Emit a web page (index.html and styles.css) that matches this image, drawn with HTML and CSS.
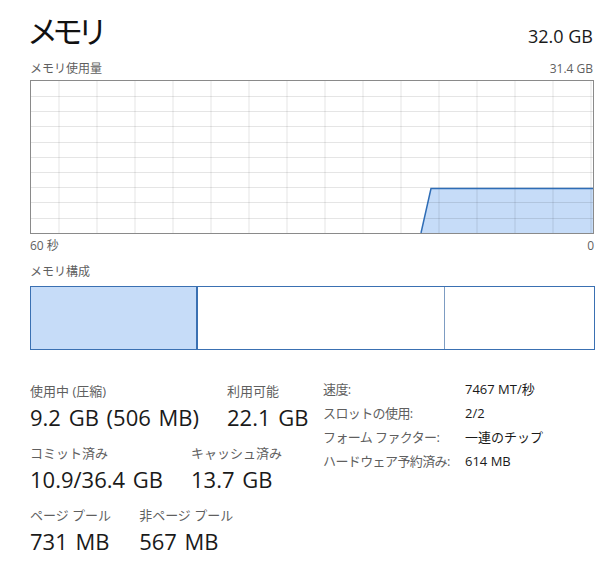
FILE: index.html
```html
<!DOCTYPE html>
<html lang="ja">
<head>
<meta charset="utf-8">
<link rel="stylesheet" href="styles.css">
</head>
<body>
<div class="page">
  <div class="header">
    <div class="title">メモリ</div>
    <div class="total">32.0 GB</div>
  </div>
  <div class="caption-row">
    <span>メモリ使用量</span>
    <span>31.4 GB</span>
  </div>
  <div class="chart">
    <svg width="562" height="152" viewBox="0 0 562 152">
      <polygon class="area" points="390,152 400,107 562,107 562,152"/>
      <g class="grid">
        <line x1="28" y1="0" x2="28" y2="152"/>
        <line x1="66" y1="0" x2="66" y2="152"/>
        <line x1="104" y1="0" x2="104" y2="152"/>
        <line x1="142" y1="0" x2="142" y2="152"/>
        <line x1="180" y1="0" x2="180" y2="152"/>
        <line x1="218" y1="0" x2="218" y2="152"/>
        <line x1="256" y1="0" x2="256" y2="152"/>
        <line x1="294" y1="0" x2="294" y2="152"/>
        <line x1="332" y1="0" x2="332" y2="152"/>
        <line x1="370" y1="0" x2="370" y2="152"/>
        <line x1="408" y1="0" x2="408" y2="152"/>
        <line x1="446" y1="0" x2="446" y2="152"/>
        <line x1="484" y1="0" x2="484" y2="152"/>
        <line x1="522" y1="0" x2="522" y2="152"/>
        <line x1="560" y1="0" x2="560" y2="152"/>
        <line x1="0" y1="15.5" x2="562" y2="15.5"/>
        <line x1="0" y1="30.5" x2="562" y2="30.5"/>
        <line x1="0" y1="45.5" x2="562" y2="45.5"/>
        <line x1="0" y1="61.5" x2="562" y2="61.5"/>
        <line x1="0" y1="76.5" x2="562" y2="76.5"/>
        <line x1="0" y1="91.5" x2="562" y2="91.5"/>
        <line x1="0" y1="106.5" x2="562" y2="106.5"/>
        <line x1="0" y1="121.5" x2="562" y2="121.5"/>
        <line x1="0" y1="137.5" x2="562" y2="137.5"/>
      </g>
      <polyline class="stroke" points="390,152 400,107.5 562,107.5"/>
    </svg>
  </div>
  <div class="axis-row">
    <span>60 秒</span>
    <span>0</span>
  </div>
  <div class="caption-row composition-caption">
    <span>メモリ構成</span>
  </div>
  <div class="composition">
    <div class="seg seg-used"></div>
    <div class="seg seg-mod"></div>
    <div class="seg seg-free"></div>
  </div>
  <div class="stats">
    <div class="stats-left">
      <div class="stat-row">
        <div class="stat">
          <div class="label">使用中 (圧縮)</div>
          <div class="value">9.2 GB (506 MB)</div>
        </div>
        <div class="stat">
          <div class="label">利用可能</div>
          <div class="value">22.1 GB</div>
        </div>
      </div>
      <div class="stat-row">
        <div class="stat">
          <div class="label">コミット済み</div>
          <div class="value">10.9/36.4 GB</div>
        </div>
        <div class="stat">
          <div class="label">キャッシュ済み</div>
          <div class="value">13.7 GB</div>
        </div>
      </div>
      <div class="stat-row">
        <div class="stat">
          <div class="label">ページ プール</div>
          <div class="value">731 MB</div>
        </div>
        <div class="stat">
          <div class="label">非ページ プール</div>
          <div class="value">567 MB</div>
        </div>
      </div>
    </div>
    <div class="specs">
      <div class="spec-label">速度:</div><div class="spec-value">7467 MT/秒</div>
      <div class="spec-label">スロットの使用:</div><div class="spec-value">2/2</div>
      <div class="spec-label">フォーム ファクター:</div><div class="spec-value">一連のチップ</div>
      <div class="spec-label">ハードウェア予約済み:</div><div class="spec-value">614 MB</div>
    </div>
  </div>
</div>
</body>
</html>
```

FILE: styles.css
```css
* { box-sizing: border-box; }
html, body {
  margin: 0;
  padding: 0;
  background: #ffffff;
}
body {
  font-family: "Open Sans", "Noto Sans CJK JP", sans-serif;
  color: #1a1a1a;
}
.page {
  width: 600px;
  height: 581px;
  padding: 0 7px 0 30px;
  overflow: hidden;
}
.header {
  display: flex;
  justify-content: space-between;
  align-items: baseline;
  height: 50px;
  padding-top: 12px;
}
.title {
  font-family: "Noto Sans CJK JP", sans-serif;
  font-size: 31px;
  line-height: 36px;
  letter-spacing: -6px;
  margin-left: -3px;
  color: #111;
}
.total {
  font-size: 18px;
  line-height: 24px;
  color: #1a1a1a;
}
.caption-row {
  display: flex;
  justify-content: space-between;
  font-size: 12px;
  line-height: 16px;
  color: #5f5f5f;
  height: 16px;
  margin-top: 11px;
}
.chart {
  margin-top: 3px;
  width: 564px;
  height: 154px;
  border: 1px solid #8a8a8a;
}
.chart svg { display: block; }
.grid line {
  stroke: rgba(0, 0, 0, 0.1);
  stroke-width: 1;
}
.area { fill: #c6dcf8; }
.stroke {
  fill: none;
  stroke: #2f6db6;
  stroke-width: 1.5;
}
.axis-row {
  display: flex;
  justify-content: space-between;
  width: 564px;
  font-size: 12px;
  line-height: 16px;
  color: #5f5f5f;
  margin-top: 4px;
}
.composition-caption {
  margin-top: 10px;
}
.composition {
  margin-top: 6px;
  width: 565px;
  height: 64px;
  display: flex;
  border: 1px solid #3a70b2;
}
.seg { height: 100%; }
.seg-used {
  width: 166px;
  background: #c6dcf8;
  border-right: 1px solid #3a70b2;
}
.seg-mod {
  width: 247px;
  border-left: 1px solid #3a70b2;
}
.seg-free {
  flex: 1;
  border-left: 1px solid #7d9cc2;
}
.stats {
  display: flex;
  margin-top: 32px;
}
.stats-left {
  width: 293px;
  display: flex;
  flex-direction: column;
  gap: 12px;
}
.stat-row {
  display: flex;
  gap: 28px;
}
.label {
  font-size: 13px;
  line-height: 18px;
  color: #5f5f5f;
}
.value {
  font-size: 22px;
  line-height: 30px;
  word-spacing: 2px;
  margin-top: 2px;
  color: #1a1a1a;
}
.specs {
  display: grid;
  grid-template-columns: 142px auto;
  grid-auto-rows: 24px;
  font-size: 13px;
  line-height: 18px;
  margin-top: -2px;
}
.spec-label {
  color: #5f5f5f;
  letter-spacing: -0.6px;
}
.spec-value { color: #1a1a1a; }
```
